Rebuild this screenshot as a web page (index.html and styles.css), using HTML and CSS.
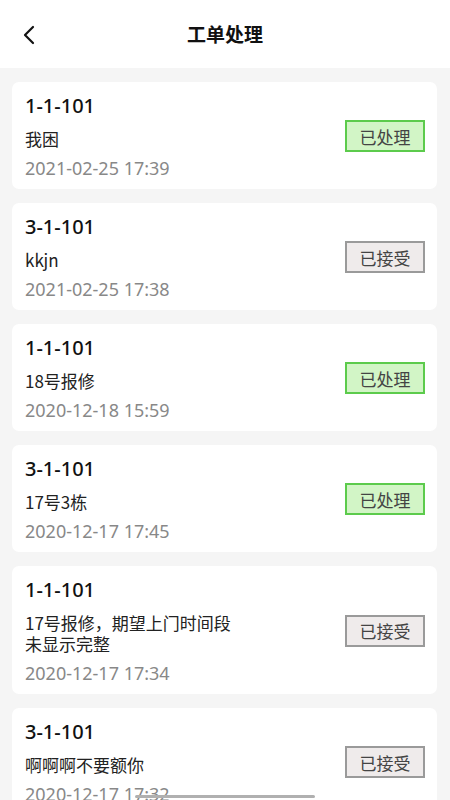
FILE: index.html
```html
<!DOCTYPE html>
<html lang="zh-CN">
<head>
    <meta charset="UTF-8">
    <meta name="viewport" content="width=device-width, initial-scale=1.0">
    <title>工单处理</title>
    <link rel="stylesheet" href="styles.css">
</head>
<body>
    <!-- 顶部导航 -->
    <div class="header">
        <span class="back">
            <svg width="14" height="20" viewBox="0 0 14 20">
                <path d="M11 2 L3 10 L11 18" fill="none" stroke="#111" stroke-width="2.2" stroke-linecap="round" stroke-linejoin="round"/>
            </svg>
        </span>
        <h1>工单处理</h1>
    </div>

    <!-- 工单列表 -->
    <div class="list">
        <div class="card">
            <div class="info">
                <p class="room">1-1-101</p>
                <p class="desc">我困</p>
                <p class="date">2021-02-25 17:39</p>
            </div>
            <span class="status done">已处理</span>
        </div>

        <div class="card">
            <div class="info">
                <p class="room">3-1-101</p>
                <p class="desc">kkjn</p>
                <p class="date">2021-02-25 17:38</p>
            </div>
            <span class="status accepted">已接受</span>
        </div>

        <div class="card">
            <div class="info">
                <p class="room">1-1-101</p>
                <p class="desc">18号报修</p>
                <p class="date">2020-12-18 15:59</p>
            </div>
            <span class="status done">已处理</span>
        </div>

        <div class="card">
            <div class="info">
                <p class="room">3-1-101</p>
                <p class="desc">17号3栋</p>
                <p class="date">2020-12-17 17:45</p>
            </div>
            <span class="status done">已处理</span>
        </div>

        <div class="card">
            <div class="info">
                <p class="room">1-1-101</p>
                <p class="desc">17号报修，期望上门时间段未显示完整</p>
                <p class="date">2020-12-17 17:34</p>
            </div>
            <span class="status accepted">已接受</span>
        </div>

        <div class="card">
            <div class="info">
                <p class="room">3-1-101</p>
                <p class="desc">啊啊啊不要额你</p>
                <p class="date">2020-12-17 17:32</p>
            </div>
            <span class="status accepted">已接受</span>
        </div>
    </div>

    <!-- 底部指示条 -->
    <div class="home-bar"></div>
</body>
</html>
```

FILE: styles.css
```css
* {
    margin: 0;
    padding: 0;
    box-sizing: border-box;
    font-family: "Noto Sans", "Noto Sans CJK SC", sans-serif;
}

body {
    background-color: #f5f5f5;
    color: #111;
    width: 450px;
    height: 800px;
    overflow: hidden;
}

.header {
    height: 68px;
    background-color: #fff;
    display: flex;
    align-items: center;
    justify-content: center;
    position: relative;
}

.header h1 {
    font-size: 19px;
    font-weight: bold;
    color: #111;
}

.back {
    position: absolute;
    left: 22px;
    top: 25px;
    display: flex;
}

.list {
    padding: 14px 13px 0 12px;
    display: flex;
    flex-direction: column;
    gap: 14px;
}

.card {
    background-color: #fff;
    border-radius: 7px;
    padding: 10px 12px 9px 13px;
    display: flex;
    align-items: center;
    justify-content: space-between;
}

.room {
    font-size: 20px;
    font-weight: 500;
    line-height: 28px;
    color: #111;
}

.desc {
    font-family: "Noto Sans CJK SC", "Noto Sans", sans-serif;
    font-size: 17px;
    line-height: 21px;
    margin-top: 8px;
    color: #222;
    max-width: 215px;
}

.date {
    font-size: 18px;
    line-height: 24px;
    margin-top: 7px;
    color: #888;
}

.status {
    width: 80px;
    height: 32px;
    display: flex;
    align-items: center;
    justify-content: center;
    font-family: "Noto Sans CJK SC", sans-serif;
    font-size: 17px;
    color: #444;
}

.status.done {
    background-color: #d2f5c6;
    border: 2px solid #5ccb4c;
}

.status.accepted {
    background-color: #efebeb;
    border: 2px solid #9a9a9a;
}

.home-bar {
    position: fixed;
    left: 135px;
    bottom: 2px;
    width: 180px;
    height: 3px;
    border-radius: 2px;
    background-color: #b0b0b0;
}
```
